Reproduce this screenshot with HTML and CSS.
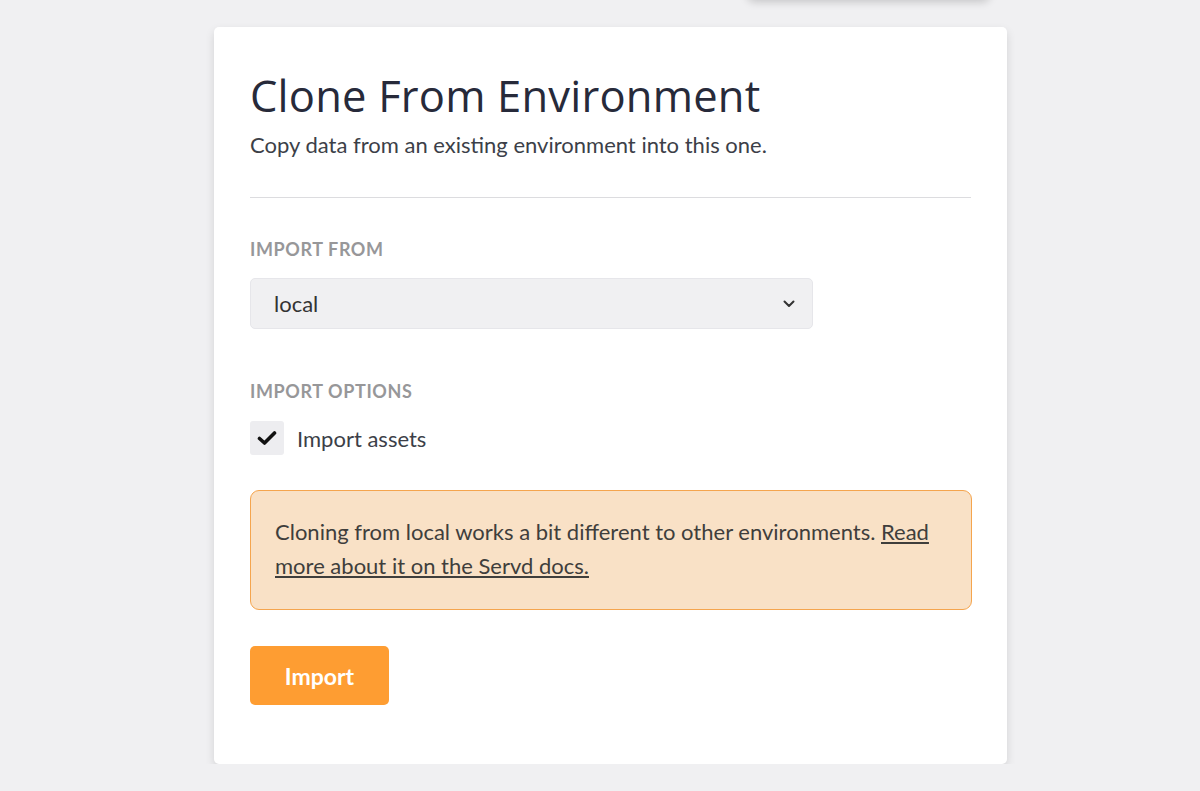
FILE: index.html
```html
<!DOCTYPE html>
<html lang="en">
<head>
  <meta charset="UTF-8">
  <meta name="viewport" content="width=device-width, initial-scale=1.0">
  <title>Clone From Environment</title>
  <link rel="stylesheet" href="styles.css">
</head>
<body>
  <div class="menu-edge"></div>
  <div class="page">
    <div class="card">
      <h1 class="card-title">Clone From Environment</h1>
      <p class="card-sub">Copy data from an existing environment into this one.</p>
      <hr class="divider">
      <form class="clone-form">
        <label class="field-label" for="source">Import From</label>
        <div class="select-wrap">
          <select id="source" class="select">
            <option>local</option>
            <option>staging</option>
            <option>production</option>
          </select>
          <svg class="chevron" width="12" height="8" viewBox="0 0 12 8"><path d="M1.5 1.5 L6 6 L10.5 1.5" fill="none" stroke="#333" stroke-width="2" stroke-linecap="round" stroke-linejoin="round"/></svg>
        </div>
        <div class="field-label options-label">Import Options</div>
        <label class="check-row">
          <span class="check-box">
            <svg width="20" height="16" viewBox="0 0 20 16"><path d="M2.5 8.5 L7.5 13 L17.5 3" fill="none" stroke="#111" stroke-width="3.6" stroke-linecap="round" stroke-linejoin="round"/></svg>
          </span>
          <span>Import assets</span>
        </label>
        <div class="notice">
          Cloning from local works a bit different to other environments. <a href="#">Read more about it on the Servd docs.</a>
        </div>
        <button type="button" class="btn-import">Import</button>
      </form>
    </div>
  </div>
</body>
</html>
```

FILE: styles.css
```css
body { margin: 0; background: #f0f0f2; font-family: 'Lato', 'Open Sans', Arial, sans-serif; color: #333; }
.menu-edge { position: absolute; top: -40px; left: 747px; width: 243px; height: 40px; background: #f7f7f9; border-radius: 8px; box-shadow: 0 2px 8px rgba(0,0,0,0.18); }
.page { padding-top: 27px; padding-left: 214px; }
.card { width: 721px; background: #fff; border-radius: 5px; padding: 43px 36px 59px; box-shadow: 0 4px 10px rgba(0,0,0,0.12); }
.card-title { margin: 0; font-family: 'Open Sans', sans-serif; font-weight: 400; font-size: 43.5px; line-height: 52px; color: #272a3a; letter-spacing: 0.2px; }
.card-sub { margin: 8px 0 0; font-size: 22px; line-height: 30px; color: #3c3f48; }
.divider { border: none; border-top: 1px solid #dcdcdf; margin: 37px 0 0; }
.clone-form { display: flex; flex-direction: column; align-items: flex-start; }
.field-label { display: block; margin-top: 40px; font-size: 18px; font-weight: 700; text-transform: uppercase; letter-spacing: 0.6px; color: #979799; line-height: 22px; }
.options-label { margin-top: 51px; }
.select-wrap { position: relative; margin-top: 18px; width: 563px; }
.select { width: 100%; height: 51px; padding: 0 23px; border: 1px solid #e6e6ea; border-radius: 5px; background: #f0f0f2; font-family: inherit; font-size: 22px; color: #333; appearance: none; -webkit-appearance: none; }
.chevron { position: absolute; right: 18px; top: 22px; }
.check-row { display: flex; align-items: center; gap: 13px; margin-top: 19px; font-size: 22px; color: #3c3f48; }
.check-box { width: 34px; height: 34px; background: #ededf0; border-radius: 3px; display: flex; align-items: center; justify-content: center; }
.notice { box-sizing: border-box; width: 722px; margin-top: 35px; padding: 24px 24px 26px; background: #f9e1c6; border: 1.5px solid #f5a54e; border-radius: 9px; font-size: 22px; line-height: 34px; color: #3f3e3c; }
.notice a { color: #3f3e3c; }
.btn-import { margin-top: 36px; width: 139px; height: 59px; background: #fe9d32; color: #fff; border: none; border-radius: 5px; font-family: inherit; font-size: 23px; font-weight: 700; cursor: pointer; }
```
